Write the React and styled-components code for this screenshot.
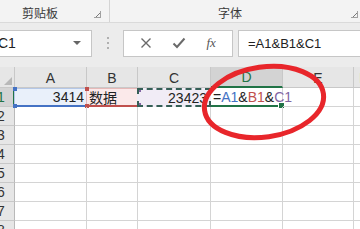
import React from 'react';
import styled, { createGlobalStyle } from 'styled-components';

const Global = createGlobalStyle`
  html, body { margin: 0; padding: 0; background: #fff; }
  body { font-family: 'Liberation Sans', 'Noto Sans CJK SC', sans-serif; }
`;

const Page = styled.div`
  position: relative;
  width: 360px;
  height: 229px;
  overflow: hidden;
  background: #fff;
`;

const Ribbon = styled.div`
  display: flex;
  height: 22px;
  background: #f3f3f3;
  border-bottom: 1px solid #dadada;
`;

const Group = styled.div`
  position: relative;
  width: ${p => p.w}px;
  flex: none;
  display: flex;
  align-items: center;
  justify-content: flex-start;
  padding-left: ${p => p.pl || 0}px;
  padding-top: 3px;
  border-right: ${p => (p.sep ? '1px solid #d4d4d4' : 'none')};
  font-size: 12px;
  color: #3a3a3a;
  box-sizing: border-box;
`;

const Launcher = styled.span`
  position: absolute;
  right: ${p => p.r}px;
  top: 11px;
  width: 6px;
  height: 6px;
  border: 1px solid #a0a0a0;
  border-top: none;
  border-left: none;
  &::after {
    content: '';
    position: absolute;
    right: 0;
    bottom: 0;
    width: 4px;
    height: 4px;
    background: linear-gradient(135deg, transparent 45%, #7a7a7a 45%, #7a7a7a 60%, transparent 60%);
  }
`;

const FormulaBar = styled.div`
  display: flex;
  align-items: center;
  height: 44px;
  padding-bottom: 4px;
  background: #ececec;
  box-sizing: border-box;
`;

const Box = styled.div`
  height: 27px;
  box-sizing: border-box;
  background: #fff;
  border: 1px solid #c6c6c6;
  display: flex;
  align-items: center;
  flex: none;
`;

const NameBox = styled(Box)`
  width: 100px;
  margin-left: -8px;
  padding-left: 5px;
  font-size: 14px;
  color: #222;
  justify-content: space-between;
  padding-right: 10px;
`;

const Caret = styled.span`
  width: 0;
  height: 0;
  border-left: 4px solid transparent;
  border-right: 4px solid transparent;
  border-top: 4px solid #666;
`;

const Dots = styled.div`
  width: 31px;
  display: flex;
  flex-direction: column;
  align-items: center;
  gap: 3px;
  & > span {
    width: 2px;
    height: 2px;
    background: #b0b0b0;
  }
`;

const Buttons = styled(Box)`
  width: 110px;
  justify-content: space-around;
  padding: 0 6px;
  color: #6a6a6a;
`;

const Fx = styled.span`
  font-family: 'Liberation Serif', serif;
  font-style: italic;
  font-size: 13px;
  color: #555;
`;

const FormulaInput = styled(Box)`
  flex: 1;
  margin-left: 5px;
  margin-right: -4px;
  padding-left: 9px;
  font-size: 13px;
  color: #222;
`;

const Sheet = styled.div`
  display: grid;
  grid-template-columns: 15px 72px 51px 73px 72px 71px 20px;
  grid-template-rows: 21px;
  grid-auto-rows: 19px;
  background: #fff;
`;

const Corner = styled.div`
  background: #e6e6e6;
  border-right: 1px solid #c8c8c8;
  border-bottom: 1px solid #c8c8c8;
  position: relative;
  &::after {
    content: '';
    position: absolute;
    right: 2px;
    bottom: 2px;
    border-left: 8px solid transparent;
    border-bottom: 8px solid #b8b8b8;
  }
`;

const ColHead = styled.div`
  background: ${p => (p.active ? '#d3d3d3' : '#e6e6e6')};
  border-right: 1px solid #c8c8c8;
  border-bottom: ${p => (p.active ? '2px solid #217346' : '1px solid #c8c8c8')};
  display: flex;
  align-items: flex-end;
  justify-content: center;
  padding-bottom: 1px;
  box-sizing: border-box;
  font-size: 14px;
  color: ${p => (p.active ? '#217346' : '#333')};
`;

const RowHead = styled.div`
  background: ${p => (p.active ? '#d3d3d3' : '#e6e6e6')};
  border-right: ${p => (p.active ? '2px solid #217346' : '1px solid #b9b9b9')};
  border-bottom: 1px solid #c8c8c8;
  overflow: hidden;
  box-sizing: border-box;
  display: flex;
  align-items: center;
  font-size: 14px;
  color: ${p => (p.active ? '#217346' : '#333')};
  & > span {
    display: block;
    width: 12px;
    margin-left: -5px;
    text-align: center;
  }
`;

const Cell = styled.div`
  position: relative;
  border-right: 1px solid #d4d4d4;
  border-bottom: 1px solid #d4d4d4;
  box-sizing: border-box;
  font-size: 14px;
  color: #222;
  display: flex;
  align-items: center;
  justify-content: ${p => (p.right ? 'flex-end' : 'flex-start')};
  padding: 0 2px;
  white-space: nowrap;
`;

const RefCell = styled(Cell)`
  background: ${p => p.fill};
  border: 1px solid ${p => p.soft};
  border-bottom: 2px solid ${p => p.line};
  margin-left: -1px;
  &::before, &::after {
    content: '';
    position: absolute;
    width: 4px;
    height: 4px;
    background: ${p => p.line};
  }
  &::before { left: -2px; top: -2px; }
  &::after { left: -2px; bottom: -3px; }
`;

const DashCell = styled(Cell)`
  background: #f1ecf6;
  margin-left: -1px;
  border: 2px dashed #355f56;
  overflow: hidden;
  &::before, &::after {
    content: '';
    position: absolute;
    left: -2px;
    width: 4px;
    height: 4px;
    background: #8064a2;
  }
  &::before { top: -2px; }
  &::after { bottom: -2px; }
`;

const ActiveCell = styled(Cell)`
  border-bottom: 2px solid #217346;
  padding-left: 2px;
  overflow: visible;
  &::after {
    content: '';
    position: absolute;
    right: -3px;
    bottom: -4px;
    width: 5px;
    height: 5px;
    background: #217346;
    border: 1px solid #fff;
  }
`;

const Ref = styled.span`
  color: ${p => p.c};
`;

const Ellipse = styled.svg`
  position: absolute;
  left: 196px;
  top: 58px;
  pointer-events: none;
`;

const cols = ['A', 'B', 'C', 'D', 'E', 'F'];

export default function App() {
  const rows = [2, 3, 4, 5, 6, 7, 8];
  return (
    <Page>
      <Global />
      <Ribbon>
        <Group w={110} pl={22} sep>
          剪贴板
          <Launcher r={8} />
        </Group>
        <Group w={250} pl={108}>
          字体
          <Launcher r={2} />
        </Group>
      </Ribbon>
      <FormulaBar>
        <NameBox>
          <span>C1</span>
          <Caret />
        </NameBox>
        <Dots>
          <span />
          <span />
          <span />
        </Dots>
        <Buttons>
          <svg width="12" height="12" viewBox="0 0 12 12">
            <path d="M1.5 1.5 L10.5 10.5 M10.5 1.5 L1.5 10.5" stroke="#6a6a6a" strokeWidth="1.4" />
          </svg>
          <svg width="14" height="12" viewBox="0 0 14 12">
            <path d="M1.5 6.5 L5 10 L12.5 1.5" stroke="#6a6a6a" strokeWidth="2" fill="none" />
          </svg>
          <Fx>fx</Fx>
        </Buttons>
        <FormulaInput>=A1&amp;B1&amp;C1</FormulaInput>
      </FormulaBar>
      <Sheet>
        <Corner />
        {cols.map(c => (
          <ColHead key={c} active={c === 'D'}>{c}</ColHead>
        ))}
        <RowHead active>
          <span>1</span>
        </RowHead>
        <RefCell right fill="#e9f0fa" soft="#b4c7e7" line="#4472c4">3414</RefCell>
        <RefCell fill="#fbe9ea" soft="#e6b9b8" line="#c0504d">数据</RefCell>
        <DashCell right>23423</DashCell>
        <ActiveCell>
          =<Ref c="#4472c4">A1</Ref>&amp;<Ref c="#c0504d">B1</Ref>&amp;<Ref c="#8064a2">C1</Ref>
        </ActiveCell>
        <Cell />
        <Cell />
        {rows.map(r => (
          <React.Fragment key={r}>
            <RowHead>
              <span>{r}</span>
            </RowHead>
            {cols.map(c => (
              <Cell key={c} />
            ))}
          </React.Fragment>
        ))}
      </Sheet>
      <Ellipse width="140" height="90" viewBox="0 0 140 90">
        <ellipse cx="68" cy="44" rx="60" ry="35" fill="none" stroke="#e8262b" strokeWidth="5" transform="rotate(-8 68 44)" />
      </Ellipse>
    </Page>
  );
}
